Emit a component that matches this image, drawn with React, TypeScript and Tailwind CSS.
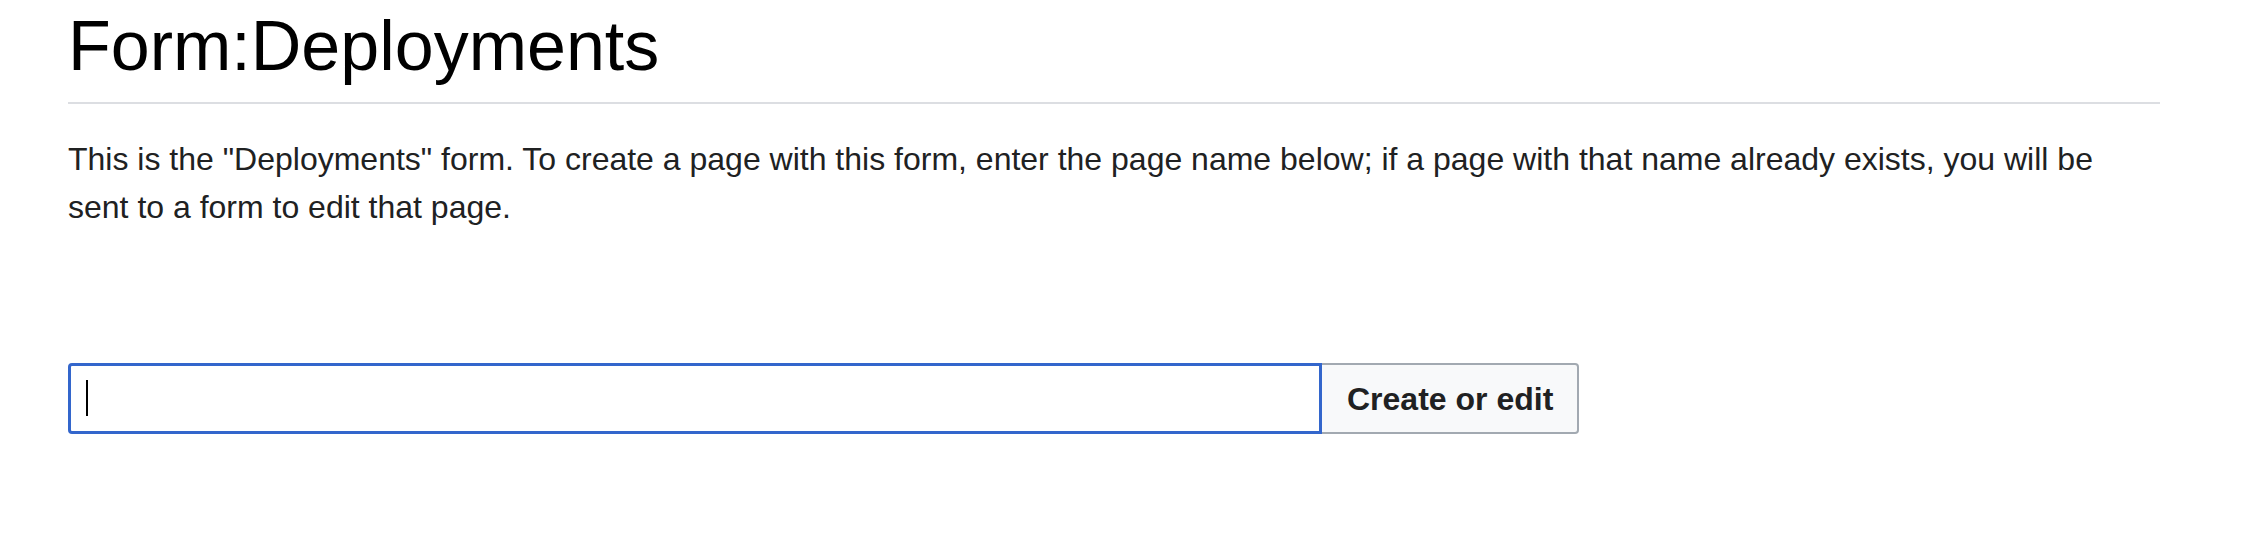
import React from "react";

export default function App() {
  return (
    <div
      className="min-h-[556px] w-full bg-white pl-[68px] pr-[92px]"
      style={{ fontFamily: '"Liberation Sans", Arial, sans-serif' }}
    >
      <h1 className="m-0 border-b-2 border-[#dcdee2] pb-[10px] text-[70px] font-normal leading-[92px] text-black">
        Form:Deployments
      </h1>
      <p className="mt-[31px] text-[32px] leading-[48px] text-[#202122]">
        This is the "Deployments" form. To create a page with this form, enter the page name below; if a page with that
        name already exists, you will be sent to a form to edit that page.
      </p>
      <div className="mt-[132px] flex h-[71px] items-stretch">
        <div className="relative w-[1254px]">
          <input
            type="text"
            className="h-full w-full rounded-l-[4px] border-[3px] border-[#3366cc] bg-white px-[14px] text-[32px] caret-transparent outline-none"
          />
          <span className="pointer-events-none absolute left-[18px] top-[17px] h-[36px] w-[2px] bg-black" />
        </div>
        <button
          type="button"
          className="flex items-center rounded-r-[4px] border-2 border-l-0 border-[#a2a9b1] bg-[#f8f9fa] pl-[25px] pr-[24px] text-[32px] font-bold text-[#202122]"
        >
          Create or edit
        </button>
      </div>
    </div>
  );
}
